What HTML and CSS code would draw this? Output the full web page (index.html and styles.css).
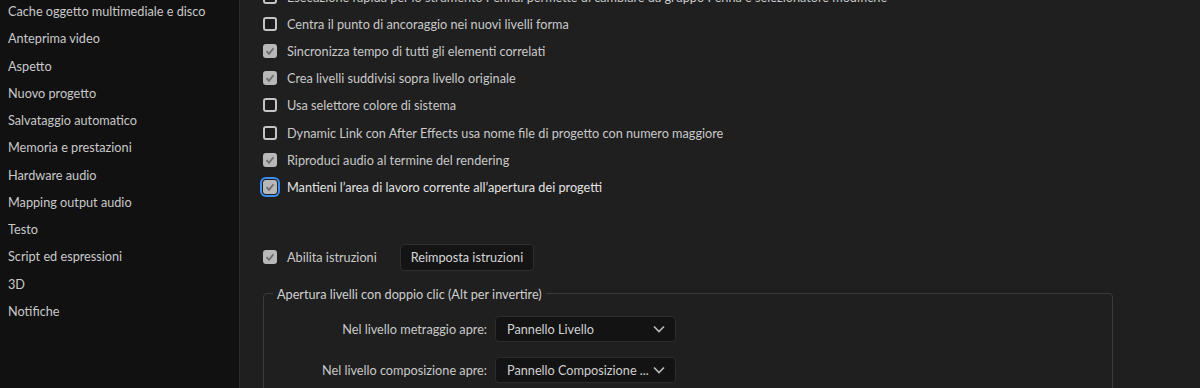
FILE: index.html
```html
<!DOCTYPE html>
<html lang="it">
<head>
	<meta charset="UTF-8">
	<title>Preferenze</title>
	<link rel="stylesheet" href="styles.css">
</head>
<body>
	<div class="sidebar">
		<ul class="nav-list">
			<li>Cache oggetto multimediale e disco</li>
			<li>Anteprima video</li>
			<li>Aspetto</li>
			<li>Nuovo progetto</li>
			<li>Salvataggio automatico</li>
			<li>Memoria e prestazioni</li>
			<li>Hardware audio</li>
			<li>Mapping output audio</li>
			<li>Testo</li>
			<li>Script ed espressioni</li>
			<li>3D</li>
			<li>Notifiche</li>
		</ul>
	</div>
	<div class="main">
		<ul class="opt-list">
			<li class="opt"><span class="cb"></span><span>Esecuzione rapida per lo strumento Penna: permette di cambiare da gruppo Penna e selezionatore modifiche</span></li>
			<li class="opt"><span class="cb"></span><span>Centra il punto di ancoraggio nei nuovi livelli forma</span></li>
			<li class="opt"><span class="cb checked"><svg viewBox="0 0 14 14"><polyline points="3.5,7.2 6,9.8 10.5,4.3"/></svg></span><span>Sincronizza tempo di tutti gli elementi correlati</span></li>
			<li class="opt"><span class="cb checked"><svg viewBox="0 0 14 14"><polyline points="3.5,7.2 6,9.8 10.5,4.3"/></svg></span><span>Crea livelli suddivisi sopra livello originale</span></li>
			<li class="opt"><span class="cb"></span><span>Usa selettore colore di sistema</span></li>
			<li class="opt"><span class="cb"></span><span>Dynamic Link con After Effects usa nome file di progetto con numero maggiore</span></li>
			<li class="opt"><span class="cb checked"><svg viewBox="0 0 14 14"><polyline points="3.5,7.2 6,9.8 10.5,4.3"/></svg></span><span>Riproduci audio al termine del rendering</span></li>
			<li class="opt focus"><span class="cb checked"><svg viewBox="0 0 14 14"><polyline points="3.5,7.2 6,9.8 10.5,4.3"/></svg></span><span>Mantieni l’area di lavoro corrente all’apertura dei progetti</span></li>
		</ul>

		<div class="tips-row">
			<span class="cb checked"><svg viewBox="0 0 14 14"><polyline points="3.5,7.2 6,9.8 10.5,4.3"/></svg></span>
			<span class="tips-label">Abilita istruzioni</span>
			<button type="button" class="btn">Reimposta istruzioni</button>
		</div>

		<fieldset class="group">
			<legend>Apertura livelli con doppio clic (Alt per invertire)</legend>
			<div class="group-grid">
				<label>Nel livello metraggio apre:</label>
				<div class="select"><span>Pannello Livello</span><svg viewBox="0 0 12 8"><polyline points="1,1.5 6,6.5 11,1.5"/></svg></div>
				<label>Nel livello composizione apre:</label>
				<div class="select"><span>Pannello Composizione ...</span><svg viewBox="0 0 12 8"><polyline points="1,1.5 6,6.5 11,1.5"/></svg></div>
			</div>
		</fieldset>
	</div>
</body>
</html>
```

FILE: styles.css
```css
/* Reset */
body,ul,li,fieldset,legend,button{ margin:0; padding:0;}
ul{ list-style:none;}
body{
	display: flex;
	height: 388px;
	overflow: hidden;
	background: #1f1f1f;
	color: #c9c9c9;
	font-family: Lato, "Liberation Sans", sans-serif;
	font-size: 12.7px;
}
/* 左侧导航 */
.sidebar{
	width: 239px;
	flex-shrink: 0;
	background: #111111;
	border-right: 1px solid #2a2a2a;
}
.nav-list{
	margin-top: -2px;
}
.nav-list li{
	height: 27.27px;
	line-height: 27.27px;
	padding-left: 8px;
	white-space: nowrap;
}
/* 右侧内容 */
.main{
	flex: 1;
	padding-left: 23px;
}
.opt-list{
	margin-top: -17px;
}
.opt{
	display: flex;
	align-items: center;
	height: 27.2px;
	white-space: nowrap;
}
.opt .cb{
	margin-right: 10px;
}
/* 复选框 */
.cb{
	width: 14px;
	height: 14px;
	box-sizing: border-box;
	border: 2px solid #c4c4c4;
	border-radius: 3px;
	background: #1b1b1b;
	flex-shrink: 0;
	position: relative;
}
.cb.checked{
	border: none;
	background: #b8b8b8;
}
.cb svg{
	width: 14px;
	height: 14px;
	display: block;
}
.cb svg polyline{
	fill: none;
	stroke: #6d6d6d;
	stroke-width: 1.8;
}
.focus{
	color: #e2e2e2;
}
.focus .cb{
	box-shadow: 0 0 0 1px #1f1f1f, 0 0 0 3px #3b8df0;
}
/* 提示行 */
.tips-row{
	display: flex;
	align-items: center;
	margin-top: 43px;
	height: 27px;
}
.tips-label{
	margin-left: 10px;
}
.btn{
	margin-left: 23px;
	height: 27px;
	padding: 0 10px;
	background: #141414;
	border: 1px solid #2e2e2e;
	border-radius: 4px;
	color: #d4d4d4;
	font-family: inherit;
	font-size: 12.7px;
}
/* 分组框 */
.group{
	width: 850px;
	box-sizing: border-box;
	margin-top: 15px;
	border: 1px solid #3a3a3a;
	border-radius: 4px;
	padding: 14px 0 20px 0;
}
.group legend{
	margin-left: 9px;
	padding: 0 4px;
	color: #cfcfcf;
}
.group-grid{
	display: grid;
	grid-template-columns: 223px 181px;
	column-gap: 8px;
	row-gap: 15px;
	align-items: center;
}
.group-grid label{
	text-align: right;
	white-space: nowrap;
}
.select{
	display: flex;
	align-items: center;
	justify-content: space-between;
	height: 26px;
	box-sizing: border-box;
	padding: 0 10px 0 11px;
	background: #131313;
	border: 1px solid #2c2c2c;
	border-radius: 4px;
	color: #d0d0d0;
	white-space: nowrap;
}
.select svg{
	width: 12px;
	height: 8px;
}
.select svg polyline{
	fill: none;
	stroke: #b8b8b8;
	stroke-width: 1.7;
}
```
